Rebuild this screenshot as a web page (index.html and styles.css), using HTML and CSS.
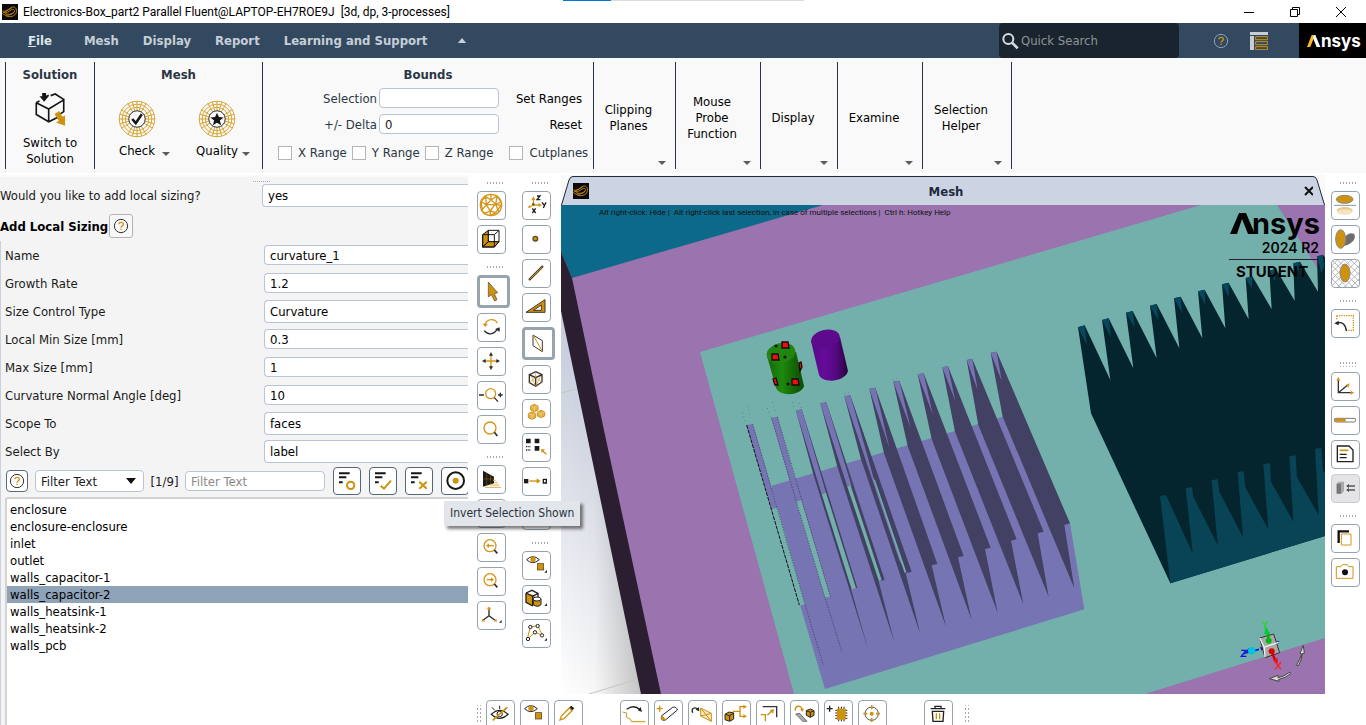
FILE: index.html
```
<!DOCTYPE html>
<html lang="en">
<head>
<meta charset="utf-8">
<title>Electronics-Box_part2 Parallel Fluent</title>
<link rel="stylesheet" href="styles.css">
</head>
<body>
<svg class="defs" aria-hidden="true">
  <symbol id="swirl" viewBox="0 0 48 48">
    <rect width="48" height="48" fill="#0a0a0a"/>
    <g fill="none" stroke="#b98319" stroke-width="3"><path d="M1 21c10 3 16-3 24-9 10-6 17-2 18 6 3 12-8 20-21 20C12 38 8 32 1 28"/><path d="M3 25c12 3 18-3 26-8 8-3 11 3 6 8-6 6-16 8-26 4"/><path d="M12 33c9 2 18-2 26-9M8 22c8-1 14-7 21-10"/></g>
  </symbol>
  <symbol id="help" viewBox="0 0 48 48">
    <circle cx="24" cy="24" r="20" fill="none" stroke="currentColor" stroke-width="3"/>
    <path d="M18 19c0-8 13-8 13 0 0 5-7 5-7 10M24 32v4" fill="none" stroke="#d09214" stroke-width="4"/>
  </symbol>
  <symbol id="wheel" viewBox="0 0 120 120">
    <g fill="none" stroke="#d6a02a" stroke-width="3"><circle cx="60" cy="60" r="56"/><circle cx="60" cy="60" r="47"/><circle cx="60" cy="60" r="37"/>
    <path d="M60 3v114M3 60h114M31 11l58 98M89 11L31 109M11 31l98 58M11 89l98-58M45 5l30 110M75 5L45 115M5 45l110 30M5 75l110-30"/></g>
    <circle cx="60" cy="60" r="26" fill="#f9f9f9" stroke="#2b2b2b" stroke-width="3"/>
  </symbol>
  <symbol id="eyebox" viewBox="3 3 81 81">
    <path d="M14 26q18-18 38 0q-20 18-38 0z" fill="none" stroke="#222" stroke-width="3"/><circle cx="33" cy="25" r="8" fill="#cf920f"/>
    <rect x="46" y="38" width="19" height="19" fill="#cf920f" stroke="#4a3a18" stroke-width="2"/>
  </symbol>
</svg>
<div class="app">
  <header class="titlebar">
    <span class="progress"></span>
    <svg class="appicon"><use href="#swirl"/></svg>
    <span class="apptitle">Electronics-Box_part2 Parallel Fluent@LAPTOP-EH7ROE9J&nbsp; [3d, dp, 3-processes]</span>
    <div class="wincontrols">
      <button aria-label="Minimize"><svg viewBox="0 0 12 12"><path d="M1 6.500h10"/></svg></button>
      <button aria-label="Restore"><svg viewBox="0 0 12 12"><path d="M1.500 3.500h7v7h-7zM3.500 3.500v-2h7v7h-2"/></svg></button>
      <button aria-label="Close"><svg viewBox="0 0 12 12"><path d="M1 1l10 10M11 1L1 11"/></svg></button>
    </div>
  </header>

  <nav class="menubar">
    <button class="menu file"><u>F</u>ile</button>
    <button class="menu">Mesh</button>
    <button class="menu">Display</button>
    <button class="menu">Report</button>
    <button class="menu">Learning and Support</button>
    <button class="menu collapse" aria-label="Collapse ribbon"><svg viewBox="0 0 10 6"><path d="M0 6l5-6 5 6z" fill="#c6ced8"/></svg></button>
    <label class="search">
      <svg viewBox="0 0 54 54"><circle cx="22" cy="21" r="15" fill="none" stroke="#d5dbe2" stroke-width="6"/><path d="M33 32l17 17" stroke="#d5dbe2" stroke-width="8"/></svg>
      <input type="text" placeholder="Quick Search" aria-label="Quick Search">
    </label>
    <button class="icobtn helpmenu" aria-label="Help"><svg><use href="#help"/></svg></button>
    <button class="icobtn layoutmenu" aria-label="Layout"><svg viewBox="0 0 54 54"><path d="M0 0h54v9H0zM0 12h12v42H0z" fill="#c6ced8"/><path d="M17 14h36v9H17zM17 29h36v9H17zM17 44h36v9H17z" fill="none" stroke="#cf920f" stroke-width="3"/></svg></button>
    <div class="brand"><svg viewBox="0 0 42 36"><path d="M0 36L14 0h10L10 36z" fill="#ffb71b"/><path d="M21 0h4l15 36H29L18 9z" fill="#fff"/></svg><span>nsys</span></div>
  </nav>

  <section class="ribbon">
    <div class="group solution"><h2>Solution</h2>
      <button class="big"><svg viewBox="0 0 96 104"><path d="M6 30v36l38 22 28-14M6 30l38 19 46-28v36L76 66M44 49v39M34 12l10-5M50 8l14-5 28 18M6 30l10-6" fill="none" stroke="#151515" stroke-width="5"/><path d="M24 0h12v10h8L30 27 16 10h8z" fill="#151515"/><path d="M62 64l14-9 10 18 8-4v31L66 90l9-4z" fill="#cf920f"/></svg>Switch to<br>Solution</button>
    </div>
    <div class="group meshgrp"><h2>Mesh</h2>
      <div class="pair">
        <button class="wheelbtn"><svg viewBox="0 0 120 120"><use href="#wheel"/><path d="M45 60l11 13 19-28" fill="none" stroke="#151515" stroke-width="8"/></svg><span>Check</span><i class="tri"></i></button>
        <button class="wheelbtn"><svg viewBox="0 0 120 120"><use href="#wheel"/><path d="M60 40l6 14 15 1-12 10 4 15-13-8-13 8 4-15-12-10 15-1z" fill="#151515"/></svg><span>Quality</span><i class="tri"></i></button>
      </div>
    </div>
    <div class="group bounds"><h2>Bounds</h2>
      <div class="fields">
        <label for="sel">Selection</label><input id="sel" type="text"><button>Set Ranges</button>
        <label for="delta">+/- Delta</label><input id="delta" type="text" value="0"><button>Reset</button>
      </div>
      <div class="checks">
        <label><input type="checkbox">X Range</label><label><input type="checkbox">Y Range</label><label><input type="checkbox">Z Range</label><label class="cut"><input type="checkbox">Cutplanes</label>
      </div>
    </div>
    <button class="group drop d1"><span>Clipping<br>Planes</span><i class="tri"></i></button>
    <button class="group drop d2"><span>Mouse<br>Probe<br>Function</span><i class="tri"></i></button>
    <button class="group drop d3"><span>Display</span><i class="tri"></i></button>
    <button class="group drop d2"><span>Examine</span><i class="tri"></i></button>
    <button class="group drop d4"><span>Selection<br>Helper</span><i class="tri"></i></button>
  </section>

  <main class="work">
    <aside class="panel">
      <div class="grip"></div>
      <div class="question"><label for="q">Would you like to add local sizing?</label><select id="q" class="field tall"><option>yes</option></select></div>
      <h1>Add Local Sizing<button class="helpbtn" aria-label="Help"><svg><use href="#help"/></svg></button></h1>
      <div class="task">
        <div class="row"><label for="f1">Name</label><input id="f1" class="field" type="text" value="curvature_1"></div>
        <div class="row"><label for="f2">Growth Rate</label><input id="f2" class="field" type="text" value="1.2"></div>
        <div class="row"><label for="f3">Size Control Type</label><select id="f3" class="field tall"><option>Curvature</option></select></div>
        <div class="row"><label for="f4">Local Min Size [mm]</label><input id="f4" class="field" type="text" value="0.3"></div>
        <div class="row"><label for="f5">Max Size [mm]</label><input id="f5" class="field" type="text" value="1"></div>
        <div class="row"><label for="f6">Curvature Normal Angle [deg]</label><input id="f6" class="field" type="text" value="10"></div>
        <div class="row"><label for="f7">Scope To</label><select id="f7" class="field tall"><option>faces</option></select></div>
        <div class="row"><label for="f8">Select By</label><select id="f8" class="field tall"><option>label</option></select></div>
        <div class="filter">
          <button class="sq" aria-label="Filter help"><svg><use href="#help"/></svg></button>
          <div class="combo"><select aria-label="Filter type"><option>Filter Text</option></select></div>
          <span class="count">[1/9]</span>
          <input class="ftext" type="text" placeholder="Filter Text" aria-label="Filter Text">
          <button class="act" aria-label="Show all"><svg viewBox="0 0 78 84"><path d="M15 19h32M15 31h22M15 46h11" stroke="#151515" stroke-width="6"/><circle cx="50" cy="55" r="11" fill="none" stroke="#cf920f" stroke-width="6"/></svg></button>
          <button class="act" aria-label="Select all shown"><svg viewBox="0 0 78 84"><path d="M15 19h32M15 31h22M15 46h11" stroke="#151515" stroke-width="6"/><path d="M32 56l10 9 21-24" fill="none" stroke="#cf920f" stroke-width="6"/></svg></button>
          <button class="act" aria-label="Deselect all shown"><svg viewBox="0 0 78 84"><path d="M15 19h32M15 31h22M15 46h11" stroke="#151515" stroke-width="6"/><path d="M40 44l22 21M62 44L40 65" stroke="#cf920f" stroke-width="6"/></svg></button>
          <button class="act" aria-label="Invert Selection Shown"><svg viewBox="0 0 78 84"><circle cx="41" cy="41" r="25" fill="#fff" stroke="#151515" stroke-width="6"/><circle cx="41" cy="41" r="9" fill="#cf920f"/></svg></button>
        </div>
        <ul class="list" role="listbox">
          <li>enclosure</li><li>enclosure-enclosure</li><li>inlet</li><li>outlet</li><li>walls_capacitor-1</li><li class="on">walls_capacitor-2</li><li>walls_heatsink-1</li><li>walls_heatsink-2</li><li>walls_pcb</li>
        </ul>
      </div>
    </aside>
    <div class="tooltip" role="tooltip">Invert Selection Shown</div>

    <div class="tools t1">
      <i class="dots"></i>
      <button aria-label="Mesh display"><svg viewBox="3 3 81 81"><g fill="none" stroke="#d6951a" stroke-width="4"><circle cx="42" cy="42" r="32"/><path d="M12 32l14-15 16 10 18-12 12 18-16 7-14-13-14 14-16-9 4 24 12-15 12 19 14-20 18 3-16 22-16-5-18 8-10-12M42 27V11M26 17l2 24M60 15l-4 25M28 41l28-1M24 63l-2 6M56 40l10 24M40 60v14M56 65l-16 9"/></g></svg></button>
      <button aria-label="Box"><svg viewBox="3 3 81 81"><path d="M17 29l17-13v34L17 66zM17 66l17-16h32L52 66z" fill="#cf920f" stroke="#151515" stroke-width="3"/><path d="M34 16h32v34L52 66M17 29h35l14-13M52 29v37H17V29" fill="none" stroke="#151515" stroke-width="3"/><path d="M34 50h32M34 16v34" stroke="#151515" stroke-width="3" stroke-dasharray="4 3"/></svg></button>
      <i class="dots"></i>
      <button class="sel" aria-label="Select"><svg viewBox="3 3 81 81"><path d="M28 15v45l9-7 10 19 7-4-8-18 10-3z" fill="#cf920f" stroke="#4b4435" stroke-width="2"/></svg></button>
      <button aria-label="Rotate"><svg viewBox="3 3 81 81"><path d="M24 34c7-18 30-18 37-3" fill="none" stroke="#d6951a" stroke-width="4"/><path d="M17 32l16 0-8 10z" fill="#d6951a"/><path d="M22 53c10 14 28 12 38-3" fill="none" stroke="#2b2b2b" stroke-width="4"/><path d="M54 48l14-5 0 13z" fill="#2b2b2b"/></svg></button>
      <button aria-label="Pan"><svg viewBox="3 3 81 81"><path d="M42 22v40M22 42h40" stroke="#d6951a" stroke-width="4"/><path d="M42 15l6 11H36zM42 69l6-11H36zM15 42l11-6v12zM69 42l-11-6v12z" fill="#2b2b2b"/></svg></button>
      <button aria-label="Zoom in or out"><svg viewBox="3 3 81 81"><circle cx="41" cy="38" r="15" fill="none" stroke="#d6951a" stroke-width="4"/><path d="M6 42h15M52 50l11 12M63 42h14M70 35v14" stroke="#2b2b2b" stroke-width="4"/></svg></button>
      <button aria-label="Zoom"><svg viewBox="3 3 81 81"><circle cx="39" cy="39" r="18" fill="none" stroke="#d6951a" stroke-width="4"/><path d="M52 52l9 11" stroke="#2b2b2b" stroke-width="5"/></svg></button>
      <i class="dots"></i>
      <button aria-label="Perspective"><svg viewBox="3 3 81 81"><path d="M18 17l33 18v20L18 65z" fill="#1d1a14"/><path d="M29 21v40M41 28v30M18 42h33" stroke="#cf920f" stroke-width="1"/><path d="M24 67h48M38 60h28M52 53h10M48 46h8" fill="none" stroke="#dfae4a" stroke-width="3"/></svg></button>
      <button aria-label="Fit"><svg viewBox="3 3 81 81"></svg></button>
      <button aria-label="Previous view"><svg viewBox="3 3 81 81"><circle cx="39" cy="38" r="18" fill="none" stroke="#d6951a" stroke-width="4"/><path d="M52 51l9 10" stroke="#2b2b2b" stroke-width="5"/><path d="M32 38h18" stroke="#d6951a" stroke-width="4"/><path d="M27 38l9-7v14z" fill="#d6951a"/></svg></button>
      <button aria-label="Next view"><svg viewBox="3 3 81 81"><circle cx="39" cy="38" r="18" fill="none" stroke="#d6951a" stroke-width="4"/><path d="M52 51l9 10" stroke="#2b2b2b" stroke-width="5"/><path d="M29 38h16" stroke="#d6951a" stroke-width="4"/><path d="M51 38l-9-7v14z" fill="#d6951a"/></svg></button>
      <button aria-label="Orientation"><svg viewBox="3 3 81 81"><path d="M36 22v22L18 58M36 44l18 14" fill="none" stroke="#2b2b2b" stroke-width="4"/><circle cx="36" cy="23" r="5" fill="#d6951a"/><path d="M14 62l2-9 8 8zM60 62l-2-9-8 8z" fill="#d6951a"/><path d="M74 57v8h-8z" fill="#222"/></svg></button>
    </div>

    <div class="tools t2">
      <i class="dots"></i>
      <button aria-label="Axes"><svg viewBox="3 3 81 81"><path d="M34 42V24M34 42h20M34 42L22 48" stroke="#d6951a" stroke-width="4"/><path d="M34 16l6 11H28zM60 42l-10-6v12zM17 51l5-9 6 7z" fill="#d6951a"/><circle cx="34" cy="40" r="4" fill="#7a5a19"/><g fill="none" stroke="#222" stroke-width="4"><path d="M45 15h9l-9 11h10M60 34l6 8M72 34l-8 17M31 52l10 14M41 52L31 66"/></g></svg></button>
      <button aria-label="Vertex"><svg viewBox="3 3 81 81"><circle cx="40" cy="41" r="7" fill="#cf920f" stroke="#5b4b2a" stroke-width="4"/></svg></button>
      <button aria-label="Edge"><svg viewBox="3 3 81 81"><path d="M23 61l38-38" stroke="#4a4232" stroke-width="7" stroke-linecap="round"/><path d="M23 61l38-38" stroke="#cf920f" stroke-width="3"/></svg></button>
      <button aria-label="Face"><svg viewBox="3 3 81 81"><path d="M12 58l57-38v38zM34 52h24V36z" fill="#cf920f" fill-rule="evenodd" stroke="#3c3728" stroke-width="3"/></svg></button>
      <button class="sel" aria-label="Surface"><svg viewBox="3 3 81 81"><path d="M27 18l28 17v33L27 50z" fill="none" stroke="#3a3a3a" stroke-width="3"/><path d="M28 19l27 48" stroke="#cf920f" stroke-width="3"/></svg></button>
      <button aria-label="Body"><svg viewBox="3 3 81 81"><path d="M41 20l19 9v22L41 64 22 53V29zM22 29l19 9 19-9M41 38v26" fill="none" stroke="#333" stroke-width="4"/><path d="M41 20v18L22 53M41 38l19 14M41 64l15-31M41 64L28 34" fill="none" stroke="#cf920f" stroke-width="2"/></svg></button>
      <button aria-label="Bodies"><svg viewBox="3 3 81 81"><g fill="#e3b047" stroke="#cf920f" stroke-width="3"><path d="M37 16l11 5v12l-11 5-11-5V21zM30 39l11 5v12l-11 5-11-5V44zM57 34l11 5v12l-11 5-11-5V39z"/><path d="M26 21l11 5 11-5M37 26v12M19 44l11 5 11-5M30 49v12M46 39l11 5 11-5M57 44v12" stroke="#fff" stroke-width="1"/></g></svg></button>
      <button aria-label="Pattern select"><svg viewBox="3 3 81 81"><path d="M12 17h14v14H12zM38 17h14v14H38zM38 39h14v14H38z" fill="#1b1b1b"/><path d="M12 41h14M12 51h14" stroke="#222" stroke-width="4" stroke-dasharray="3 2"/><path d="M62 54l11 10" stroke="#cf920f" stroke-width="4"/><path d="M57 49h12L59 60z" fill="#cf920f"/></svg></button>
      <button aria-label="Transform selection"><svg viewBox="3 3 81 81"><path d="M6 36h13v13H6z" fill="#1b1b1b"/><path d="M22 42h24" stroke="#cf920f" stroke-width="4"/><path d="M56 42l-12-8v16z" fill="#cf920f"/><path d="M64 37h9v11h-9z" fill="none" stroke="#1b1b1b" stroke-width="4"/></svg></button>
      <button aria-label="Clear"><svg viewBox="3 3 81 81"></svg></button>
      <i class="dots"></i>
      <button aria-label="Show or hide"><svg viewBox="3 3 81 81"><use href="#eyebox" x="3" y="3" width="81" height="81"/><path d="M75 57v8h-8z" fill="#222"/></svg></button>
      <button aria-label="Parts"><svg viewBox="3 3 81 81"><path d="M12 24v28l20 11 6-4V31z" fill="#cf920f"/><path d="M12 24l18-8 18 9v12M12 24v28l20 11M12 24l20 10 16-9M32 34v28" fill="none" stroke="#222" stroke-width="4"/><path d="M34 42v17q12 10 23 0V42" fill="#cf920f" stroke="#222" stroke-width="3"/><ellipse cx="45" cy="42" rx="12" ry="6" fill="#fff" stroke="#222" stroke-width="3"/><path d="M75 55v8h-8z" fill="#222"/></svg></button>
      <button aria-label="Measure"><svg viewBox="3 3 81 81"><path d="M16 60l9-37 23-2 13 28-21-9-24 20" fill="none" stroke="#cf920f" stroke-width="3"/><g fill="#fff" stroke="#222" stroke-width="3"><circle cx="25" cy="24" r="5"/><circle cx="47" cy="21" r="5"/><circle cx="39" cy="40" r="5"/><circle cx="60" cy="49" r="5"/><circle cx="18" cy="60" r="5"/></g><path d="M75 57v8h-8z" fill="#222"/></svg></button>
    </div>

    <section class="view">
      <header class="tab">
        <svg class="endcap" viewBox="0 0 12 29"><path d="M0 29L8 4Q9 .500 12 .500V29z" fill="#ccd4e4"/><path d="M.500 29L8 4Q9 .500 12 .500" fill="none" stroke="#1f2a3a"/></svg>
        <div class="tabbody"><svg class="appicon"><use href="#swirl"/></svg><h2>Mesh</h2><button aria-label="Close"><svg viewBox="0 0 12 12"><path d="M2 2l8 8M10 2l-8 8"/></svg></button></div>
        <svg class="endcap" viewBox="0 0 12 29"><path d="M12 29L4 4Q3 .500 0 .500V29z" fill="#ccd4e4"/><path d="M11.500 29L4 4Q3 .500 0 .500" fill="none" stroke="#1f2a3a"/></svg>
      </header>
      <svg class="scene" viewBox="561 205 764 489" preserveAspectRatio="xMidYMid slice">
        <defs>
          <linearGradient id="sky" x1="0" y1="0" x2="0" y2="1"><stop offset="0" stop-color="#c3cadd"/><stop offset=".3" stop-color="#d3d8e4"/><stop offset="1" stop-color="#fff"/></linearGradient>
          <linearGradient id="fade" x1="0" x2="1"><stop offset="0" stop-color="#000" stop-opacity="0"/><stop offset=".4" stop-color="#000" stop-opacity=".03"/><stop offset="1" stop-color="#000" stop-opacity=".25"/></linearGradient>
          <linearGradient id="vio" x1="0" x2="1"><stop offset="0" stop-color="#570785"/><stop offset=".35" stop-color="#650b99"/><stop offset=".7" stop-color="#53087d"/><stop offset="1" stop-color="#25033a"/></linearGradient>
          <linearGradient id="grn" x1="0" x2="1"><stop offset="0" stop-color="#176609"/><stop offset=".4" stop-color="#1d8a0c"/><stop offset="1" stop-color="#0d4a05"/></linearGradient>
        </defs>
        <rect x="561" y="205" width="764" height="489" fill="#9a73af"/>
        <path d="M561 300v394h84z" fill="url(#sky)"/>
        <path d="M561 300v394h84z" fill="url(#fade)"/>
        <path d="M561 393l24-6M589 694l49-15" stroke="#c4c4c4"/>
        <path d="M561 205h262L572 278l-11-26z" fill="#0d6989"/>
        <path d="M561 252l11 26L605 435 661 694h-20L587 435 561 311z" fill="#2b1e31"/>
        <path d="M700 352L1201 205h76l48 75v358L1145 694H794z" fill="#73b0ab"/>
        <g transform="translate(730 320) scale(.33333)">
          <path d="M125 497L818 290l202 320 43 258-778 239-75-252 15-2-83-290-17-60z" fill="#7674b2"/>
          <g fill="#434163">
            <path d="M782 98l18-3 220 515-17 5 30 190L818 290z"/>
            <path d="M710 120l17-3 214 518-18 5 33 190L745 315z"/>
            <path d="M637 142l17-3 206 519-17 4 37 191L675 335z"/>
            <path d="M563 163l18-3 201 523-17 4 38 191L605 357z"/>
            <path d="M490 185l18-3 193 526-17 4 41 188L533 378z"/>
            <path d="M418 206l18-3 186 529-17 4 43 184L462 400z"/>
            <path d="M343 229l18-3 184 530-18 3 44 184L393 418z"/>
            <path d="M271 250l18-3 175 533-18 4 47 183L322 440z"/>
            <path d="M198 272l17-4 167 535-19 4 52 183L250 463z"/>
          </g>
          <g fill="#7674b2">
            <path d="M782 98l18-3 15 87zM710 120l17-3 16 93zM637 142l17-3 22 105zM563 163l18-3 27 122zM490 185l18-3 34 142zM418 206l18-3 42 180z"/>
            <path d="M343 229l18-3 69 245 90 270-12-20zM271 250l18-3 76 252-12 4zM198 272l17-4 73 250-13 4zM124 293l18-3 72 251-17 4zM50 315l18-3 74 251-17 4z"/>
          </g>
          <path d="M127 567l15-4 83 290-16 4zM198 545l16-4 87 289-16 3zM275 522l13-4 90 287-13 3zM352 500l10-3 93 283-8 4zM430 477l5 3 94 276-5 3z" fill="#73b0ab"/>
          <path d="M50 315l158 540" stroke="#100d18" stroke-width="3" stroke-dasharray="12 3"/>
          <path d="M68 312l157 541 55 182M142 290l159 540M124 293l161 540 50 160" fill="none" stroke="#35334f" stroke-width="2" stroke-dasharray="4 4"/>
          <path d="M38 277l8 30M52 258l10 36M112 264l8 26M127 246l8 28M187 246l6 22M208 250l6 14M343 222l14-4M488 180l14-4" stroke="#45706e" stroke-width="2" stroke-dasharray="3 9"/>
        </g>
        <g transform="translate(1060 200) scale(.33333)">
          <path d="M54 382L74 376 151 540 126 360 146 355 220 505 198 338 218 333 290 475 270 317 290 312 358 445 342 295 362 290 427 415 414 274 434 269 496 385 486 253 506 248 566 358 557 234 577 229 635 328 628 212 648 207 704 302 700 190 720 185 774 275 771 169 789 165 798 175V1007L331 1150 93 640z" fill="#04242e"/>
          <path d="M54 382l20-6 7 60zM126 360l20-5 7 57zM198 338l20-5 6 50zM270 317l20-5 5 48zM342 295l20-5 4 48zM414 274l20-5 2 46zM486 253l20-5v42zM557 234l20-5-2 36zM628 212l20-5-3 36zM700 190l20-5-5 30zM771 169l18-4 3 36-8 18z" fill="#08485c"/>
          <path d="M300 888L318 885 398 1060 377 865 396 861 400 890 473 1035 455 841 473 837 478 875 549 1012 533 817 551 813 556 862 625 988 610 793 630 789 633 845 700 965 688 769 707 766 711 832 776 945 765 746 784 743 789 812 798 824V1007L331 1150z" fill="#084356"/>
        </g>
        <path d="M811 341l8 34c4 9 26 7 29-4l-8-34z" fill="url(#vio)"/><ellipse cx="825.500" cy="339" rx="14.500" ry="9" transform="rotate(-12 825 339)" fill="#5d0a8d"/>
        <path d="M767 356l9 32c4 9 25 8 28-2l-8-34z" fill="url(#grn)"/><ellipse cx="781" cy="353" rx="14.500" ry="10" transform="rotate(-12 781 353)" fill="#21860f"/>
        <g fill="#f30c10" stroke="#180808" stroke-width="1.300"><path d="M782 342h6l1 6h-7zM772 354h6l1 6h-7zM799 363l2-1 1 5-2 4zM773 379l3-1 2 7h-3zM792 379h6l1 6h-7z"/></g>
        <g fill="#0a1a05"><circle cx="776" cy="346" r="1.600"/><circle cx="785" cy="357" r="1.600"/><circle cx="788" cy="384" r="1.600"/></g>
        <text x="599" y="215" class="hint">Alt right-click: Hide |&nbsp; Alt right-click last selection, in case of multiple selections |&nbsp; Ctrl h: Hotkey Help</text>
        <path d="M1230 234l9-21h7l9 21h-7l-6-15-5 15z" fill="#050505"/>
        <text x="1320" y="234" class="wm big1" text-anchor="end">nsys</text>
        <text x="1319" y="253" class="wm yr" text-anchor="end">2024 R2</text>
        <path d="M1229 259.500h90" stroke="#222"/>
        <text x="1236" y="277" class="wm st">STUDENT</text>
        <g transform="translate(1060 200) scale(.33333)">
          <path d="M655 1332l-12-5 15-5zM600 1340l12 4-8 8z" fill="#1616c8"/>
          <path d="M599 1314l42-12 18 56-44 15z" fill="#a9a9a9" stroke="#333" stroke-width="3"/><path d="M611 1342l45-15M599 1314l14 28 2 30" stroke="#eee" stroke-width="4" fill="none"/>
          <path d="M625 1322v-25" stroke="#0a0" stroke-width="7"/><path d="M618 1279l12 24h-18z" fill="#0c3"/><circle cx="626" cy="1322" r="9" fill="#0b1"/>
          <path d="M635 1354l10 26" stroke="#c00" stroke-width="7"/><path d="M653 1397l-14-18 14-5z" fill="#e11"/><circle cx="635" cy="1354" r="9" fill="#d00"/>
          <path d="M597 1348l-40 11 12-14" stroke="#1220d0" stroke-width="5" fill="none"/><circle cx="575" cy="1352" r="11" fill="#00c4dc"/>
          <g fill="#d9d9d9" stroke="#444" stroke-width="3"><path d="M709 1396q12-18 16-34l-5-2 10-24 3 24-6 1q-2 20-12 36z"/><path d="M690 1416q-20 15-36 17v-7l-26 10 29 8-1-6q20-3 36-17z"/></g>
          <g fill="none" stroke-width="4"><path d="M607 1264l8 10 8-10M615 1274v12" stroke="#1fdc1f"/><path d="M544 1351h14l-14 18h15" stroke="#1212e8"/><path d="M646 1386l17 22M663 1386l-17 22" stroke="#f22"/></g>
        </g>
      </svg>
    </section>

    <div class="tools right">
      <i class="dots"></i>
      <button aria-label="Reflections"><svg viewBox="3 3 81 81"><ellipse cx="41" cy="25" rx="25" ry="12" fill="#cf920f" stroke="#888" stroke-width="3"/><path d="M9 43h66" stroke="#8b959e" stroke-width="3"/><ellipse cx="41" cy="59" rx="24" ry="11" fill="#e8c98a"/><ellipse cx="41" cy="63" rx="22" ry="8" fill="#f3e3c0"/></svg></button>
      <button aria-label="Shadows"><svg viewBox="3 3 81 81"><path d="M32 54c10-24 22-34 38-27 8 20-16 33-32 36z" fill="#6d6d6d"/><ellipse cx="29" cy="42" rx="15" ry="28" fill="#cf920f" stroke="#888" stroke-width="3"/></svg></button>
      <button aria-label="Transparency"><svg viewBox="3 3 81 81"><path d="M3 20l16-17M3 40L40 3M3 60L60 3M3 80L80 3M20 84l64-64M40 84l44-44M60 84l24-24M3 20l64 64M3 40l44 44M3 60l24 24M3 3l80 80M20 3l64 64M40 3l44 44M60 3l24 24" stroke="#b5b5b5" stroke-width="3"/><ellipse cx="42" cy="42" rx="15" ry="27" fill="#cf920f" stroke="#888" stroke-width="3"/></svg></button>
      <i class="dots"></i>
      <button aria-label="Undo region"><svg viewBox="3 3 81 81"><path d="M17 20h50v44H48M17 20v12" fill="none" stroke="#d6951a" stroke-width="4" stroke-dasharray="4 3"/><path d="M18 42c16-4 26 4 28 24" fill="none" stroke="#222" stroke-width="4"/><path d="M10 43l13-8v14z" fill="#222"/></svg></button>
      <i class="dots lg"></i>
      <button aria-label="Axis triad"><svg viewBox="3 3 81 81"><path d="M22 22v40h40M22 62l27-22" fill="none" stroke="#333" stroke-width="4"/><path d="M22 14l6 12H16zM70 62l-11-6v12zM56 34l-3 13-8-9z" fill="#d6951a"/></svg></button>
      <button aria-label="Ruler"><svg viewBox="3 3 81 81"><rect x="10" y="37" width="64" height="11" rx="5" fill="#fff" stroke="#777" stroke-width="3"/><path d="M14 38h30v9H14q-6-4 0-9z" fill="#cf920f"/></svg></button>
      <button aria-label="Title"><svg viewBox="3 3 81 81"><path d="M19 18h35l12 12v35H19z" fill="none" stroke="#222" stroke-width="4"/><path d="M26 31h26" stroke="#cf920f" stroke-width="5"/><path d="M26 43h21M26 53h21" stroke="#222" stroke-width="4"/></svg></button>
      <button class="off" aria-label="Boundary markers"><svg viewBox="3 3 81 81"><path d="M17 29l6-6h16v28l-7 8H17z" fill="#aaa"/><path d="M17 29h13v30H17z" fill="#777"/><path d="M48 36h24M48 48h24" stroke="#555" stroke-width="4"/><path d="M45 36l9-6v12zM45 48l9-6v12z" fill="#555"/></svg></button>
      <i class="dots"></i>
      <button aria-label="Copy"><svg viewBox="3 3 81 81"><path d="M23 57V22h31" fill="none" stroke="#111" stroke-width="7"/><path d="M31 30h29v33H31z" fill="#fff" stroke="#d6951a" stroke-width="3"/></svg></button>
      <button aria-label="Save picture"><svg viewBox="3 3 81 81"><path d="M16 26h14l4-6h15l4 6h13v35H16z" fill="#fff" stroke="#d6951a" stroke-width="3"/><circle cx="42" cy="43" r="9" fill="#111"/></svg></button>
    </div>

    <div class="tools bottom">
      <i class="dots"></i>
      <button aria-label="Hide"><svg viewBox="3 3 81 81"><path d="M16 43q25-24 50 0q-25 24-50 0z" fill="none" stroke="#222" stroke-width="4"/><path d="M41 17v10M18 22l8 9M64 22l-8 9" stroke="#222" stroke-width="3"/><circle cx="41" cy="42" r="8" fill="none" stroke="#222" stroke-width="3"/><path d="M20 61l42-38" stroke="#cf920f" stroke-width="5"/></svg></button>
      <button aria-label="Show"><svg><use href="#eyebox"/></svg></button>
      <button class="end1" aria-label="Edit"><svg viewBox="3 3 81 81"><path d="M18 60l4-12 24-24 8 8-24 24z" fill="#fff" stroke="#cf920f" stroke-width="4"/><path d="M46 22l6-5 9 8-6 6z" fill="#222"/></svg></button>
      <button aria-label="Redo surface"><svg viewBox="3 3 81 81"><path d="M20 28q22-16 40 1" fill="none" stroke="#222" stroke-width="4"/><path d="M66 36l-4-15-9 10z" fill="#222"/><path d="M8 36l12 3v13l12 6 2 7h42" fill="none" stroke="#cf920f" stroke-width="3"/></svg></button>
      <button aria-label="Add cylinder"><svg viewBox="3 3 81 81"><path d="M17 17v18M8 26h18" stroke="#cf920f" stroke-width="4"/><path d="M22 48l34-26q12-3 14 8L34 60q-14 4-12-12z" fill="#fff" stroke="#222" stroke-width="3"/><path d="M22 48q10 0 12 12-16 4-12-12z" fill="#cf920f"/></svg></button>
      <button aria-label="Rotate mesh"><svg viewBox="3 3 81 81"><path d="M14 38c-6-14 8-18 16-10" fill="none" stroke="#222" stroke-width="4"/><path d="M34 34l-1-13-10 8z" fill="#222"/><path d="M38 24l32 16v24L38 48zM38 24l32 40M38 48l32-8" fill="#f8e8c8" stroke="#cf920f" stroke-width="3"/></svg></button>
      <button aria-label="Split"><svg viewBox="3 3 81 81"><path d="M9 43l12-7 14 3v18l-12 7-14-5z" fill="#cf920f" stroke="#222" stroke-width="3"/><path d="M9 43l14 4 12-8M23 47v16" fill="none" stroke="#222" stroke-width="3"/><path d="M32 34h22V20h12M54 34v15h12" fill="none" stroke="#cf920f" stroke-width="4"/><path d="M75 20l-11-6v12zM75 49l-11-6v12z" fill="#cf920f"/></svg></button>
      <button aria-label="Extend"><svg viewBox="3 3 81 81"><path d="M20 20h42v32" fill="none" stroke="#333" stroke-width="4"/><path d="M14 44h14v20M34 46l14-14" fill="none" stroke="#cf920f" stroke-width="4"/><path d="M54 27l-3 14-10-10z" fill="#cf920f"/></svg></button>
      <button aria-label="Convert"><svg viewBox="3 3 81 81"><path d="M16 32c-2-16 18-18 20-4" fill="none" stroke="#cf920f" stroke-width="4"/><path d="M37 36l-7-10h12z" fill="#cf920f"/><path d="M17 42l12-2 22 24H38z" fill="#aaa" stroke="#444" stroke-width="2"/><path d="M49 32l12-5 11 5v14l-11 6-12-6z" fill="#cf920f" stroke="#222" stroke-width="3"/><path d="M49 32l12 5 11-5M61 37v15" fill="none" stroke="#222" stroke-width="3"/></svg></button>
      <button aria-label="Add component"><svg viewBox="3 3 81 81"><path d="M17 17v18M8 26h18" stroke="#222" stroke-width="4"/><path d="M34 31h36M34 39h36M34 47h36M34 55h36M44 20v44M52 20v44M60 20v44" stroke="#222" stroke-width="3"/><path d="M39 26h26v33H39z" fill="#cf920f"/></svg></button>
      <button class="end2" aria-label="Target"><svg viewBox="3 3 81 81"><circle cx="41" cy="41" r="20" fill="none" stroke="#555" stroke-width="3"/><circle cx="41" cy="41" r="6" fill="#cf920f"/><path d="M41 16v12M41 54v12M16 41h12M54 41h12" stroke="#cf920f" stroke-width="5"/></svg></button>
      <button aria-label="Delete"><svg viewBox="3 3 81 81"><path d="M33 24v-5h18v5M20 26h44M25 34h34l-2 30H27z" fill="none" stroke="#222" stroke-width="4"/><path d="M37 40v18M47 40v18" stroke="#cf920f" stroke-width="4"/></svg></button>
      <i class="dots"></i>
    </div>
  </main>
</div>
</body>
</html>
```
FILE: styles.css
```
* { box-sizing: border-box; }
html, body { height: 100%; margin: 0; }
body, button, input, select { font-family: "DejaVu Sans Condensed", "Noto Sans", sans-serif; font-size: 13px; color: #1a1a1a; }
button { border: 0; background: none; padding: 0; margin: 0; }
h1, h2 { margin: 0; font-size: 13px; font-weight: bold; }
svg { display: block; }
.defs { position: absolute; width: 0; height: 0; }
.app { height: 100vh; display: flex; flex-direction: column; overflow: hidden; background: #fff; }

.titlebar { height: 23px; flex: none; display: flex; align-items: center; padding-left: 2px; position: relative; }
.progress { position: absolute; top: 0; left: 563px; width: 241px; height: 1px; background: linear-gradient(to right, #0078d7 20%, #ddd 20%); }
.appicon { width: 16px; height: 16px; flex: none; }
.apptitle { margin-left: 5px; font-family: Roboto, sans-serif; font-size: 12px; color: #000; white-space: pre; }
.wincontrols { margin-left: auto; display: flex; gap: 34px; padding-right: 19px; }
.wincontrols svg { width: 12px; height: 12px; fill: none; stroke: #000; }

.menubar { height: 35px; flex: none; display: flex; align-items: center; background: #33495f; padding-left: 16px; }
.menu { padding: 0 12px; font-weight: bold; color: #c6ced8; white-space: nowrap; }
.file { margin-right: 8px; color: #dfe5eb; }
.collapse { margin-left: 6px; }
.collapse svg { width: 10px; height: 5px; }
.search { margin-left: auto; width: 180px; height: 35px; display: flex; align-items: center; gap: 2px; padding-left: 2px; background: #1a242e; border-radius: 4px; }
.search svg { width: 18px; height: 18px; flex: none; }
.search input { width: 100%; min-width: 0; border: 0; padding: 0; background: none; color: #aaa; }
.search input::placeholder { color: #8d9398; }
.icobtn { flex: none; }
.helpmenu { margin-left: 34px; color: #8ea2ba; }
.helpmenu svg { width: 16px; height: 16px; }
.layoutmenu { margin: 0 31px 0 21px; }
.layoutmenu svg { width: 18px; height: 18px; }
.brand { align-self: stretch; width: 67px; background: #000; color: #fff; display: flex; align-items: center; padding-left: 8px; font: bold 17px Inter, sans-serif; }
.brand svg { width: 14px; height: 12px; flex: none; }

.ribbon { height: 115px; flex: none; display: flex; background: #f9f9f9; padding: 4px 0 4px 5px; }
.group { border-left: 1px solid #273444; flex: none; text-align: center; }
.ribbon h2 { color: #2b3644; line-height: 16px; padding-top: 5px; }
.solution { width: 89px; }
.big { line-height: 16px; color: #000; }
.big svg { width: 32px; height: 34px; margin: 10px auto 8px; }
.meshgrp { width: 168px; }
.pair { display: flex; gap: 25px; padding: 17px 0 0 20px; }
.wheelbtn { display: grid; grid-template-columns: 44px 8px; column-gap: 3px; justify-items: center; color: #000; }
.wheelbtn svg { width: 38px; height: 38px; grid-column: 1; }
.wheelbtn span { grid-column: 1; line-height: 26px; }
.wheelbtn .tri { grid-column: 2; align-self: end; margin-bottom: 8px; }
.tri { border: 4px solid transparent; border-top: 4px solid #5c5c5c; border-bottom: 0; width: 0; height: 0; }
.bounds { width: 331px; color: #2b3644; }
.fields { display: grid; grid-template-columns: 114px 120px 1fr; column-gap: 2px; row-gap: 6px; align-items: center; margin-top: 5px; }
.fields label { text-align: right; color: #2b3644; }
.fields input { height: 20px; min-width: 0; border: 1px solid #b9c4d3; border-radius: 4px; background: #fff; padding: 0 5px; }
.fields button { text-align: right; padding-right: 11px; color: #000; }
.checks { display: flex; align-items: center; gap: 5px; padding-left: 15px; margin-top: 11px; white-space: nowrap; }
.checks label { display: flex; align-items: center; gap: 6px; color: #2b3644; }
.checks .cut { margin-left: 11px; }
.checks input { appearance: none; width: 14px; height: 14px; margin: 0; border: 1px solid #b5b5b5; background: #fff; }
.drop { position: relative; line-height: 16px; padding: 5px 14px 0 2px; color: #000; }
.drop .tri { position: absolute; right: 9px; bottom: 4px; }
.d1 { width: 82px; }
.d2 { width: 85px; }
.d3 { width: 77px; }
.d4 { width: 90px; border-right: 1px solid #273444; }

.work { flex: 1; min-height: 0; margin-top: 2px; display: grid; grid-template-columns: 468px 45px 48px 1fr 41px; grid-template-rows: 1fr 31px; position: relative; }
.panel { grid-row: 1 / 3; background: #f4f4f4; overflow: hidden; display: flex; flex-direction: column; border-top: 2px solid #fafafa; }
.grip { width: 17px; margin: 4px 0 2px 253px; border-top: 1px dotted #aaa; flex: none; }
.question { display: grid; grid-template-columns: 262px 1fr; align-items: center; flex: none; }
.field { height: 20px; width: 100%; min-width: 0; border: 1px solid #b9c4d6; border-right: 0; border-radius: 4px 0 0 4px; background: #fff; padding: 0 5px; appearance: none; color: #000; }
.tall { height: 23px; }
.panel label { color: #1a1a1a; white-space: nowrap; }
h1 { display: flex; align-items: center; gap: 1px; height: 24px; margin-top: 7px; flex: none; color: #000; white-space: nowrap; }
.helpbtn { width: 24px; height: 24px; border: 1px solid #b3b3b3; border-radius: 3px; color: #333; background: #f8f8f8; }
.helpbtn svg { width: 16px; height: 16px; margin: auto; }
.task { flex: 1; min-height: 0; border-left: 1px solid #c9d1e0; margin-top: 3px; display: flex; flex-direction: column; }
.row { display: grid; grid-template-columns: 259px 1fr; align-items: center; height: 28px; flex: none; padding-left: 4px; }
.filter { display: flex; align-items: center; height: 30px; flex: none; padding-left: 5px; margin-top: 1px; }
.filter > * { flex: none; }
.sq { width: 22px; height: 22px; border: 1px solid #5b6b7e; border-radius: 4px; background: #fff; color: #333; }
.sq svg { width: 16px; height: 16px; margin: auto; }
.combo { margin-left: 7px; width: 109px; position: relative; }
.combo select { width: 100%; height: 22px; appearance: none; border: 1px solid #b9c4d6; border-radius: 4px; background: #fff; padding: 0 5px; }
.combo::after { content: ""; position: absolute; right: 8px; top: 8px; border: 5px solid transparent; border-top: 6px solid #111; border-bottom: 0; }
.count { width: 41px; text-align: center; }
.ftext { width: 140px; height: 20px; border: 1px solid #b9c4d6; border-radius: 4px; padding: 0 5px; background: #fff; }
.ftext::placeholder { color: #8a8a8a; }
.act { width: 28px; height: 28px; margin-left: 8px; border: 1px solid #55657a; border-radius: 4px; background: #fff; overflow: hidden; }
.act svg { width: 26px; height: 28px; margin: -1px 0; }
.list { flex: 1; margin: 1px 0 0 4px; padding: 2px 0 0; list-style: none; border: 1px solid #d3d3d3; border-width: 2px 0 0 2px; border-radius: 3px 0 0 0; background: #fff; }
.list li { line-height: 17px; padding-left: 3px; color: #000; }
.list .on { background: #8ea3b8; }
.tooltip { position: absolute; left: 444px; top: 326px; z-index: 2; padding: 0 6px; height: 25px; line-height: 25px; font-size: 12px; background: #e2e5e9; color: #273442; box-shadow: 3px 3px 3px rgba(0,0,0,.5); white-space: nowrap; }

.tools { display: flex; flex-direction: column; gap: 5px; background: #fff; }
.tools button { width: 29px; height: 29px; flex: none; border: 1px solid #95a3b0; border-radius: 4px; background: #fff; }
.tools button svg { width: 27px; height: 27px; }
.tools .sel { width: 33px; height: 33px; border: 3px solid #96a4ae; }
.tools .off { background: #e4e4e7; border-color: #c9ccd2; }
.dots { flex: none; width: 17px; height: 11px; margin-left: 9px; background: radial-gradient(circle, #a9a9a9 1px, transparent 1px) 0 6px / 3px 4px repeat; background-clip: content-box; padding-top: 5px; }
.t1 { padding-left: 9px; }
.t2 { padding-left: 9px; }
.right { padding-left: 6px; }
.right .dots { margin-left: 8px; }
.right .lg { height: 24px; padding-top: 18px; }
.bottom { grid-column: 2 / 6; grid-row: 2; flex-direction: row; padding: 6px 0 0 8px; overflow: hidden; }
.bottom .dots { width: 5px; height: 18px; margin: 5px 0 0; padding: 0; }
.bottom .end1 { margin-right: 32px; }
.bottom .end2 { margin-right: 32px; }
.bottom .dots:last-child { margin-left: 6px; }

.view { display: flex; flex-direction: column; min-width: 0; min-height: 0; background: #f9f9f9; padding-top: 1px; }
.tab { display: flex; height: 29px; flex: none; }
.endcap { width: 12px; height: 29px; flex: none; }
.tabbody { flex: 1; display: flex; align-items: center; background: #ccd4e4; border-top: 1px solid #1f2a3a; }
.tabbody h2 { flex: 1; text-align: center; color: #1f2a3a; }
.tabbody button { flex: none; margin-right: -2px; }
.tabbody button svg { width: 12px; height: 12px; stroke: #111; stroke-width: 2; fill: none; }
.scene { flex: 1; min-height: 0; width: 100%; }
.hint { font: 8px Roboto, sans-serif; fill: #101010; }
.wm { font-family: Inter, "Open Sans", sans-serif; font-weight: bold; fill: #050505; }
.big1 { font-size: 29px; }
.yr { font-size: 14px; font-weight: 600; }
.st { font-size: 15px; }
```
